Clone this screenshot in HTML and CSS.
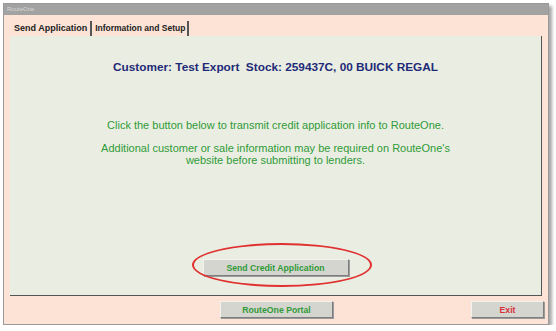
FILE: index.html
```html
<!DOCTYPE html>
<html>
<head>
<meta charset="utf-8">
<link rel="stylesheet" href="styles.css">
</head>
<body>
<div class="window">
  <div class="titlebar">RouteOne</div>
  <div class="tabs">
    <div class="tab active">Send Application</div>
    <div class="tab info">Information and Setup</div>
  </div>
  <div class="panel">
    <div class="heading">Customer: Test Export&nbsp; Stock: 259437C, 00 BUICK REGAL</div>
    <p class="msg first">Click the button below to transmit credit application info to RouteOne.</p>
    <p class="msg">Additional customer or sale information may be required on RouteOne's<br>website before submitting to lenders.</p>
    <div class="send-wrap">
      <button class="btn send">Send Credit Application</button>
      <div class="ring"></div>
    </div>
  </div>
  <div class="footer">
    <button class="btn portal">RouteOne Portal</button>
    <button class="btn exit">Exit</button>
  </div>
</div>
</body>
</html>
```
FILE: styles.css
```css
html, body {
  margin: 0;
  padding: 0;
  background: #ffffff;
  font-family: "Liberation Sans", Arial, sans-serif;
}
.window {
  box-sizing: border-box;
  margin: 3px 0 0 3px;
  width: 546px;
  height: 322px;
  border: 1px solid #9a9a9a;
  background: #fde2d6;
  box-shadow: 3px 3px 3px rgba(0,0,0,0.35);
  display: flex;
  flex-direction: column;
}
.titlebar {
  height: 11px;
  background: #a2a2a2;
  color: #d8d8d8;
  font-size: 6px;
  line-height: 11px;
  padding-left: 3px;
}
.tabs {
  height: 21px;
  display: flex;
  align-items: flex-end;
  padding-left: 8px;
}
.tab {
  font-size: 9px;
  font-weight: bold;
  color: #222;
  height: 15px;
  line-height: 14px;
  padding: 0 2px 0 2px;
  border-right: 2px solid #555;
  margin-right: 1px;
}
.tab.active {
  padding-right: 3px;
}
.tab.info {
  font-size: 8.5px;
}
.panel {
  height: 260px;
  box-sizing: border-box;
  margin: 0 6px 0 6px;
  background: #eaeee2;
  border-right: 1px solid #555;
  border-bottom: 1px solid #555;
  display: flex;
  flex-direction: column;
  align-items: center;
  padding-top: 24px;
  padding-bottom: 19px;
}
.heading {
  font-size: 11.8px;
  font-weight: bold;
  color: #1e2a78;
  line-height: 14px;
}
.msg {
  margin: 0;
  font-size: 11px;
  color: #2f9a38;
  text-align: center;
  line-height: 12px;
}
.msg.first {
  margin-top: 45px;
  margin-bottom: 11px;
}
.send-wrap {
  margin-top: auto;
  position: relative;
}
.btn {
  box-sizing: border-box;
  font-family: "Liberation Sans", Arial, sans-serif;
  font-size: 8.7px;
  font-weight: bold;
  background: #d5d5cf;
  border: 1px solid;
  border-color: #f2f2ee #7e7e7e #7e7e7e #f2f2ee;
  box-shadow: 1px 1px 0 #9a9a9a;
  height: 17px;
  padding: 0;
  color: #2f9a38;
}
.send {
  width: 146px;
}
.ring {
  position: absolute;
  left: -11px;
  top: -14px;
  width: 176px;
  height: 40px;
  border: 2px solid #e03030;
  border-radius: 50%;
}
.footer {
  flex: 1;
  display: flex;
  align-items: flex-start;
  padding-top: 5px;
  padding-left: 216px;
}
.portal {
  width: 113px;
}
.exit {
  width: 73px;
  margin-left: auto;
  margin-right: 4px;
  color: #d8303a;
}
```
